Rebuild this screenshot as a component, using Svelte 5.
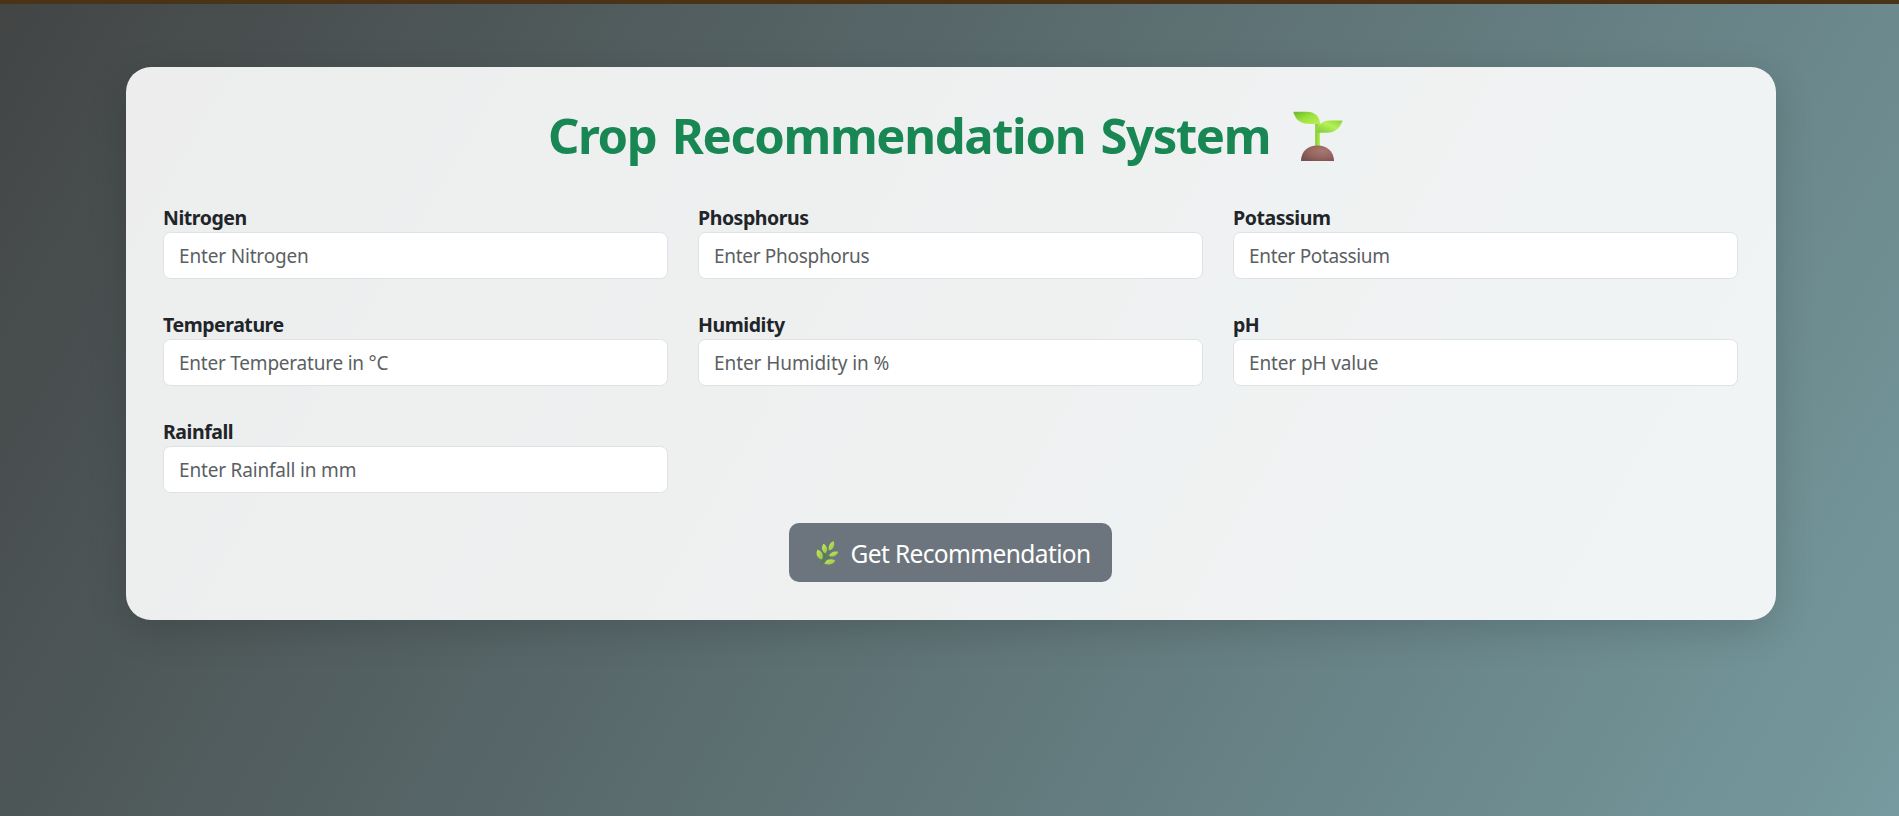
<script>
  const fields = [
    { id: 'nitrogen', label: 'Nitrogen', hint: 'Enter Nitrogen', tracking: -0.17 },
    { id: 'phosphorus', label: 'Phosphorus', hint: 'Enter Phosphorus', tracking: -0.3 },
    { id: 'potassium', label: 'Potassium', hint: 'Enter Potassium', tracking: -0.34 },
    { id: 'temperature', label: 'Temperature', hint: 'Enter Temperature in °C', tracking: -0.22 },
    { id: 'humidity', label: 'Humidity', hint: 'Enter Humidity in %', tracking: -0.07 },
    { id: 'ph', label: 'pH', hint: 'Enter pH value', tracking: -0.13 },
    { id: 'rainfall', label: 'Rainfall', hint: 'Enter Rainfall in mm', tracking: -0.18 },
  ];
</script>

<div class="page">
  <main class="card">
    <h1>
      <span>Crop Recommendation System</span>
      <svg class="seedling" viewBox="0 0 50 50" aria-hidden="true">
        <defs>
          <linearGradient id="leafLeft" x1="0" y1="0" x2="1" y2="1">
            <stop offset="0" stop-color="#67b82f" /><stop offset=".5" stop-color="#9ee23e" /><stop offset="1" stop-color="#b8ef5b" />
          </linearGradient>
          <linearGradient id="leafRight" x1="0" y1="1" x2="1" y2="0">
            <stop offset="0" stop-color="#7ecb36" /><stop offset=".55" stop-color="#b5f057" /><stop offset="1" stop-color="#8bd337" />
          </linearGradient>
          <linearGradient id="stem"><stop stop-color="#84c636" /><stop offset="1" stop-color="#b4ee52" /></linearGradient>
          <radialGradient id="soil" cx=".65" cy=".35" r=".75">
            <stop stop-color="#aa7770" /><stop offset=".6" stop-color="#93635f" /><stop offset="1" stop-color="#78504f" />
          </radialGradient>
        </defs>
        <path fill="url(#stem)" d="M22.200 11h4.800v26h-4.800z" />
        <path fill="url(#leafLeft)" d="M1.200.8h12C22 .8 27 5.600 27 13h-9C8.500 13 4 9.500 2 5 1.200 3.200.7 2.600.5 1.700Q.4.800 1.200.800z" />
        <path fill="url(#leafRight)" d="M48.700 9.400H37C29.500 9.400 24.500 13.500 24.300 21.700H34c8 0 12-4 14-8.600.8-1.800 1.400-2.200 1.500-3q.1-.7-.8-.7z" />
        <path fill="url(#soil)" d="M8 50v-1C8.500 40 15 34.400 24.400 34.400S40.500 40 41 49v1z" />
      </svg>
    </h1>

    <form onsubmit={(event) => event.preventDefault()}>
      <div class="grid">
        {#each fields as field}
          <div class="field">
            <label for={field.id}>{field.label}</label>
            <input id={field.id} type="text" placeholder={field.hint} style:letter-spacing="{field.tracking}px" />
          </div>
        {/each}
      </div>

      <button type="submit">
        <svg class="herb" viewBox="0 0 24 26" aria-hidden="true">
          <defs>
            <linearGradient id="herbLeaf" x1="0" y1="0" x2="1" y2="1">
              <stop stop-color="#c6e957" /><stop offset="1" stop-color="#92c444" />
            </linearGradient>
          </defs>
          <path fill="none" stroke="#528341" stroke-width="1.100" d="M4.400 25C5.500 20 9.500 14 15 8M6 19 3 15M8.500 15.500 8 8M8 18l7-3M6.500 20.500 12 21" />
          <g fill="url(#herbLeaf)">
            <path d="M1.600 8.600c4.800 1.800 6.200 6 4.400 10C1 17.400-.8 13 1.600 8.600z" />
            <path d="M7.600 2.800c4.200 2.800 4.700 6.600 1.700 9.600-3.500-2.200-4.500-6-1.700-9.600z" />
            <path d="M17.800 0c1.300 5-.8 8.800-4.800 9.500-1-4.300.7-7.800 4.800-9.500z" />
            <path d="M22.400 10.800c-1.500 4.300-5.300 5.700-9.400 4.200 1.500-4 5-5.400 9.400-4.200z" />
            <path d="M19.200 19.200c-1.600 4.200-6 5.200-10.900 3.500 1.800-4.200 6-5.400 10.900-3.500z" />
          </g>
        </svg>
        <span>Get Recommendation</span>
      </button>
    </form>
  </main>
</div>

<style>
  :global(body) {
    margin: 0;
  }

  .page {
    box-sizing: border-box;
    min-height: 100vh;
    padding: 63px 123px 0 126px;
    border-top: 4px solid #503820;
    border-image: linear-gradient(#4b3318 0 50%, #594735 50%) 4 0 0 0;
    background: linear-gradient(120deg, #434545, #769a9f) border-box;
    font-family: 'Noto Sans', 'Open Sans', sans-serif;
    color: #212529;
  }

  .card {
    box-sizing: border-box;
    height: 553px;
    padding: 37px 38px 0 37px;
    border-radius: 25px;
    background: rgba(255, 255, 255, 0.9);
    box-shadow: 0 10px 38px rgba(0, 0, 0, 0.15);
  }

  h1 {
    display: flex;
    justify-content: center;
    align-items: center;
    gap: 23px;
    height: 64px;
    margin: 0 0 35px;
    padding-right: 10px;
    color: #198754;
    font-size: 49px;
    line-height: 62px;
    letter-spacing: -1.380px;
    word-spacing: 4px;
    white-space: nowrap;
  }

  h1 span {
    padding-bottom: 2px;
  }

  .seedling {
    width: 50px;
    height: 50px;
  }

  .grid {
    display: grid;
    grid-template-columns: repeat(3, 1fr);
    column-gap: 30px;
    row-gap: 30px;
  }

  .field {
    display: flex;
    flex-direction: column;
    height: 77px;
  }

  label {
    height: 29px;
    line-height: 30px;
    font-size: 19.500px;
    font-weight: 700;
    letter-spacing: -0.45px;
  }

  input {
    box-sizing: border-box;
    width: 100%;
    height: 47px;
    padding: 0 15px;
    border: 1px solid #dee2e6;
    border-radius: 7.500px;
    background: #fff;
    color: #212529;
    font: 19px 'Noto Sans', 'Open Sans', sans-serif;
  }

  input::placeholder {
    color: #5b5f64;
    opacity: 1;
  }

  button {
    display: flex;
    align-items: center;
    gap: 11px;
    width: 323px;
    height: 59px;
    margin: 29px auto 0;
    padding: 2px 0 0 26.500px;
    border: 0;
    border-radius: 10px;
    background: #6c757d;
    color: #fff;
    font: 24.500px 'Noto Sans', 'Open Sans', sans-serif;
    letter-spacing: -0.62px;
    white-space: nowrap;
  }

  .herb {
    flex: none;
    width: 24px;
    height: 26px;
  }
</style>
